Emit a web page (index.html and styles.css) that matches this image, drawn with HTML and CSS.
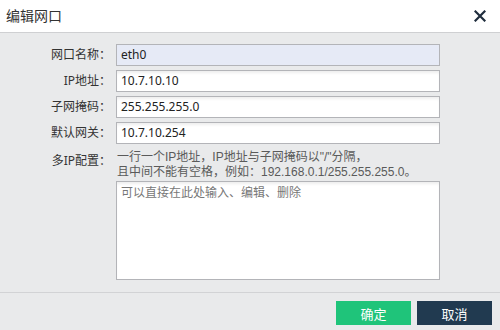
FILE: index.html
```html
<!DOCTYPE html>
<html lang="zh-CN">
<head>
<meta charset="utf-8">
<title>编辑网口</title>
<link rel="stylesheet" href="styles.css">
</head>
<body>
<div class="dialog">
  <div class="dlg-head">
    <span class="dlg-title">编辑网口</span>
    <span class="dlg-close" aria-label="关闭">
      <svg width="12" height="12" viewBox="0 0 12 12"><path d="M1.5 1.5L10.5 10.5M10.5 1.5L1.5 10.5" stroke="#1f2d3d" stroke-width="2.2" stroke-linecap="square"/></svg>
    </span>
  </div>
  <div class="dlg-body">
    <div class="form">
      <label class="lbl">网口名称：</label>
      <div class="field readonly">eth0</div>
      <label class="lbl">IP地址：</label>
      <div class="field">10.7.10.10</div>
      <label class="lbl">子网掩码：</label>
      <div class="field">255.255.255.0</div>
      <label class="lbl">默认网关：</label>
      <div class="field">10.7.10.254</div>
      <label class="lbl lbl-top">多IP配置：</label>
      <div class="multi">
        <div class="hint">一行一个IP地址，IP地址与子网掩码以"/"分隔，</div>
        <div class="hint">且中间不能有空格，例如：192.168.0.1/255.255.255.0。</div>
        <div class="area">可以直接在此处输入、编辑、删除</div>
      </div>
    </div>
  </div>
  <div class="dlg-foot">
    <button class="btn btn-ok">确定</button>
    <button class="btn btn-cancel">取消</button>
  </div>
</div>
</body>
</html>
```

FILE: styles.css
```css
* { box-sizing: border-box; }
html, body { margin: 0; padding: 0; }
body {
  width: 500px;
  height: 330px;
  overflow: hidden;
  font-family: "Noto Sans", "Noto Sans CJK SC", sans-serif;
  font-size: 12px;
  color: #333;
  background: #e9eaeb;
}
.dialog {
  display: flex;
  flex-direction: column;
  height: 330px;
}
.dlg-head {
  height: 33px;
  background: #fff;
  border-bottom: 1px solid #cfd0d2;
  display: flex;
  align-items: center;
  justify-content: space-between;
  padding: 0 14px 0 6px;
}
.dlg-title {
  font-size: 14px;
  color: #333;
  line-height: 1;
}
.dlg-close {
  display: flex;
  width: 12px;
  height: 12px;
}
.dlg-body {
  height: 260px;
  padding-top: 11px;
  border-bottom: 1px solid #d2d3d5;
}
.form {
  display: grid;
  grid-template-columns: 111px 324px;
  column-gap: 5px;
  row-gap: 4px;
}
.lbl {
  text-align: right;
  line-height: 22px;
  color: #333;
  white-space: nowrap;
}
.lbl-top { line-height: 15px; padding-top: 5px; }
.field {
  height: 22px;
  border: 1px solid #b3b4b8;
  background: #fff;
  box-shadow: inset 0 3px 3px -1px rgba(0,0,0,0.07);
  padding: 0 4px;
  line-height: 20px;
  color: #222;
}
.field.readonly {
  background: #e6eaf6;
  box-shadow: none;
}
.multi { display: flex; flex-direction: column; padding-top: 2px; }
.hint {
  font-family: "Liberation Sans", "Noto Sans CJK SC", sans-serif;
  font-size: 12px;
  color: #5a5a5a;
  height: 15px;
  line-height: 15px;
  padding-left: 1px;
  white-space: nowrap;
}
.area {
  margin-top: 1px;
  height: 99px;
  border: 1px solid #b3b4b8;
  background: #fff;
  box-shadow: inset 0 3px 3px -1px rgba(0,0,0,0.07);
  padding: 3px 4px;
  color: #777;
  line-height: 16px;
}
.dlg-foot {
  flex: 1;
  display: flex;
  justify-content: flex-end;
  align-items: flex-start;
  gap: 6px;
  padding: 8px 8px 0 0;
}
.btn {
  width: 75px;
  height: 24px;
  border: 0;
  margin: 0;
  font-family: inherit;
  font-size: 13px;
  color: #fff;
  padding: 0;
}
.btn-ok { background: #1fc47a; }
.btn-cancel { background: #213a50; }
```
